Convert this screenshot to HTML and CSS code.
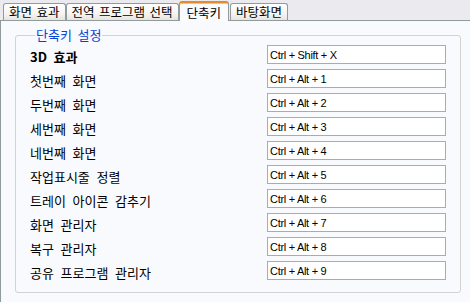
FILE: index.html
```html
<!DOCTYPE html>
<html lang="ko">

<head>
  <meta charset="UTF-8">
  <title>단축키</title>
  <link rel="stylesheet" href="styles.css">
</head>

<body>
  <div class="tabs">
    <div class="tab">화면 효과</div>
    <div class="tab">전역 프로그램 선택</div>
    <div class="tab active">단축키</div>
    <div class="tab">바탕화면</div>
  </div>

  <div class="panel">
    <div class="group">
      <div class="legend">단축키 설정</div>
      <div class="rows">
        <div class="row"><span class="label bold">3D 효과</span><input class="key" value="Ctrl + Shift + X" readonly></div>
        <div class="row"><span class="label">첫번째 화면</span><input class="key" value="Ctrl + Alt + 1" readonly></div>
        <div class="row"><span class="label">두번째 화면</span><input class="key" value="Ctrl + Alt + 2" readonly></div>
        <div class="row"><span class="label">세번째 화면</span><input class="key" value="Ctrl + Alt + 3" readonly></div>
        <div class="row"><span class="label">네번째 화면</span><input class="key" value="Ctrl + Alt + 4" readonly></div>
        <div class="row"><span class="label">작업표시줄 정렬</span><input class="key" value="Ctrl + Alt + 5" readonly></div>
        <div class="row"><span class="label">트레이 아이콘 감추기</span><input class="key" value="Ctrl + Alt + 6" readonly></div>
        <div class="row"><span class="label">화면 관리자</span><input class="key" value="Ctrl + Alt + 7" readonly></div>
        <div class="row"><span class="label">복구 관리자</span><input class="key" value="Ctrl + Alt + 8" readonly></div>
        <div class="row"><span class="label">공유 프로그램 관리자</span><input class="key" value="Ctrl + Alt + 9" readonly></div>
      </div>
    </div>
  </div>
</body>

</html>
```

FILE: styles.css
```css
body {
  margin: 0;
  padding: 0;
  background-color: #ebeaee;
  font-family: "Noto Sans CJK KR", "DejaVu Sans", sans-serif;
  font-size: 13px;
  color: #000;
  overflow: hidden;
}

.tabs {
  display: flex;
  align-items: flex-end;
  height: 20px;
  padding-left: 3px;
}

.tab {
  height: 17px;
  box-sizing: border-box;
  padding: 0 5px;
  font-size: 12.5px;
  line-height: 16px;
  word-spacing: 1px;
  border: 1px solid #919b9c;
  border-bottom: none;
  border-radius: 3px 3px 0 0;
  background: linear-gradient(#ffffff, #f6f5f2 60%, #e6e5e1);
  white-space: nowrap;
}

.tab.active {
  height: 20px;
  margin: 0 1px -1px 0;
  padding: 2px 7px 0 7px;
  border-top: 2px solid #e68b2c;
  background: #fafbfe;
  box-shadow: inset 0 1px 0 #ffc73c;
  position: relative;
  z-index: 1;
}

.panel {
  background-color: #f9fafe;
  border-top: 1px solid #919b9c;
  border-left: 1px solid #919b9c;
  padding: 14px 9px 20px 14px;
}

.group {
  border: 1px solid #d3d3cf;
  border-radius: 3px;
  padding: 0 14px 12px 14px;
}

.legend {
  width: fit-content;
  margin: -8px 0 0 5px;
  padding: 0 1px;
  line-height: 14px;
  word-spacing: 2px;
  color: #0046d5;
  background-color: #f9fafe;
}

.rows {
  display: flex;
  flex-direction: column;
  gap: 5px;
  margin-top: 3px;
}

.row {
  display: flex;
  align-items: flex-start;
  height: 19px;
}

.label {
  flex: 1;
  padding-top: 5px;
  line-height: 14px;
  word-spacing: 3px;
}

.bold {
  font-weight: bold;
}

.key {
  width: 179px;
  height: 19px;
  box-sizing: border-box;
  margin: 0;
  padding: 0 2px;
  border: 1px solid #a5acb2;
  background: #fff;
  font-family: "Liberation Sans", Arial, sans-serif;
  font-size: 11px;
  letter-spacing: -0.3px;
  color: #000;
  outline: none;
}
```
